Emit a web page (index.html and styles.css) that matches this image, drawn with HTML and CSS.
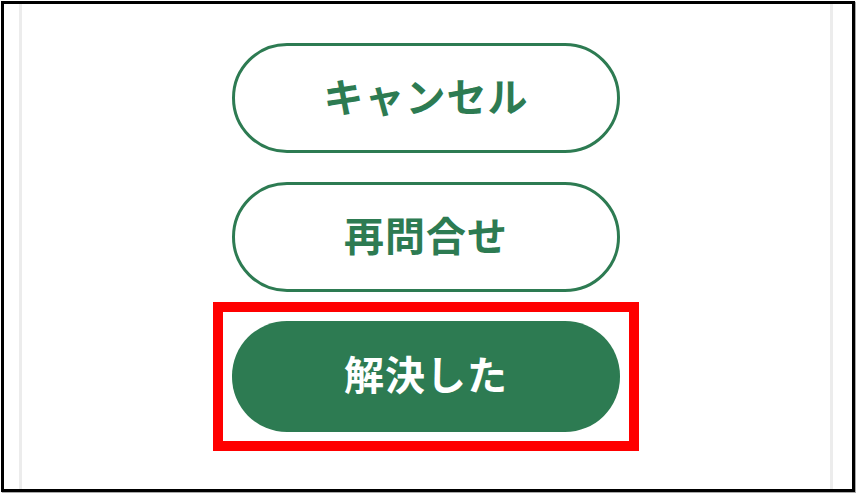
FILE: index.html
```html
<!DOCTYPE html>
<html lang="ja">
<head>
    <meta charset="UTF-8">
    <meta name="viewport" content="width=device-width, initial-scale=1.0">
    <title>お問い合わせ</title>
    <link rel="stylesheet" href="styles.css">
</head>
<body>
    <div class="frame">
        <div class="panel">
            <div class="acciones">
                <button class="btn btn-linea">キャンセル</button>
                <button class="btn btn-linea">再問合せ</button>
                <div class="marcado">
                    <button class="btn btn-lleno">解決した</button>
                </div>
            </div>
        </div>
    </div>
</body>
</html>
```

FILE: styles.css
```css
body {
    margin: 0;
    background: #fff;
    font-family: "Noto Sans CJK JP", "Noto Sans", sans-serif;
}
.frame {
    margin: 1px;
    width: 848px;
    height: 485px;
    border: 3px solid #000;
    box-shadow: 1px 1px 1px #aaa;
    background: #fff;
    overflow: hidden;
}
.panel {
    height: 100%;
    margin: 0 19px 0 15px;
    border-left: 3px solid #ececec;
    border-right: 3px solid #ececec;
    background: #fff;
}
.acciones {
    display: flex;
    flex-direction: column;
    align-items: center;
    gap: 29px;
    padding-top: 39px;
}
.btn {
    width: 388px;
    height: 110px;
    padding: 0 0 7px;
    border-radius: 55px;
    font-family: inherit;
    font-size: 40px;
    font-weight: 700;
    letter-spacing: 1px;
    cursor: pointer;
}
.btn-linea {
    background: #fff;
    color: #2d7b52;
    border: 3px solid #2d7b52;
}
.btn-lleno {
    display: block;
    height: 111px;
    background: #2d7b52;
    color: #fff;
    border: none;
}
.marcado {
    outline: 10px solid #ff0000;
    outline-offset: 9px;
}
```
